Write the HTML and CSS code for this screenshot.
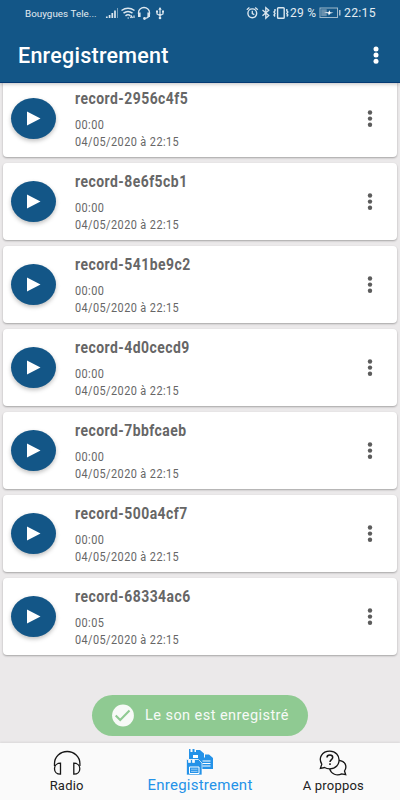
FILE: index.html
```html
<!DOCTYPE html>
<html lang="fr">
<head>
    <meta charset="UTF-8">
    <meta name="viewport" content="width=device-width, initial-scale=1.0">
    <title>Enregistrement</title>
    <link rel="stylesheet" href="styles.css">
</head>
<body>

    <header class="header">
        <!-- Barre d'état -->
        <div class="status">
            <span class="carrier">Bouygues Tele...</span>
            <svg class="status-left" width="60" height="16" viewBox="0 0 60 16" fill="none" stroke="#dce7ef">
                <path d="M1.800 13v-1.500M4.600 13v-3M7.300 13V8M10 13V5.500" stroke-width="1.700"/>
                <path d="M12.500 13V3" stroke-width="1" opacity=".5"/>
                <path d="M16.500 5.500q6.500-4.500 13 0M18.500 8.200q4.500-3.500 9 0M20.500 10.800q2.500-2 5 0" stroke-width="1.500"/>
                <path d="M22.500 13h1.500M25.500 13l1-2 1 2M29 10.500v2.500" stroke-width="1.200"/>
                <path d="M33.500 9V7.500a5.500 5 0 0 1 11 0V9q0 3.500-4 4.300" stroke-width="1.300"/>
                <path d="M34.300 7.500v4.500M43.700 7.500v4.500" stroke-width="2.600"/>
                <circle cx="39.500" cy="13.500" r="1.400" fill="#dce7ef" stroke="none"/>
                <path d="M55 3v10M52 6.500v2.500l3 1.500 3-1.500V6.500" stroke-width="1.200"/>
                <path d="M53.300 4.700L55 2l1.700 2.700zM51 5.500h2v2h-2zM57 5.500h2v2h-2z" fill="#dce7ef" stroke="none"/>
                <circle cx="55" cy="13" r="1.300" fill="#dce7ef" stroke="none"/>
            </svg>
            <svg class="status-right" width="44" height="16" viewBox="0 0 44 16" fill="none" stroke="#dce7ef">
                <circle cx="6.300" cy="8.300" r="4.400" stroke-width="1.400"/>
                <path d="M6.300 5.700v3l2 1M.8 4.700l2.600-2.200M11.800 4.700L9.200 2.500" stroke-width="1.300"/>
                <path d="M16.500 5l6.300 5.500-3 2.700V2.600l3 2.700-6.300 5.500" stroke-width="1.300"/>
                <rect x="31.600" y="2.800" width="6.600" height="10.400" rx=".8" stroke-width="1.400"/>
                <path d="M29 4v1.800l-1 1.200 1 1.500-1 1.500 1 1.500M40.800 4v1.800l1 1.200-1 1.500 1 1.500-1 1.500" stroke-width="1.400"/>
            </svg>
            <span class="percent">29 %</span>
            <svg class="battery" width="23" height="12" viewBox="0 0 23 12">
                <rect x="1" y="1" width="17.500" height="9.500" fill="none" stroke="#9fb9cb"/>
                <rect x="2.200" y="2.200" width="5.500" height="7" fill="#6890ae"/>
                <path d="M5 5.300h4.500l.8-2 1 2 3.200.5-3.200.8-1.500 2-.5-2z" fill="#fff"/>
                <path d="M20.800 3v5.500" stroke="#c3d3df" stroke-width="1.300"/>
            </svg>
            <span class="clock">22:15</span>
        </div>
        <div class="toolbar">
            <h1>Enregistrement</h1>
            <svg class="menu" width="8" height="20" viewBox="0 0 8 20" fill="#fff">
                <circle cx="4" cy="4" r="2.500"/><circle cx="4" cy="10.100" r="2.500"/><circle cx="4" cy="16.200" r="2.500"/>
            </svg>
        </div>
    </header>

    <!-- Liste des enregistrements -->
    <main id="records"></main>

    <div class="toast">
        <svg width="24" height="24" viewBox="0 0 24 24">
            <circle cx="12" cy="11.500" r="10.900" fill="#f7faf7"/>
            <path d="M4.700 11.400l4.500 4.500 9.300-9.300" fill="none" stroke="#8fca92" stroke-width="2.100"/>
        </svg>
        <span>Le son est enregistré</span>
    </div>

    <nav class="tabs">
        <a class="tab">
            <svg width="30" height="28" viewBox="0 0 30 28" fill="none" stroke="#161616" stroke-width="1.300">
                <path d="M2.500 17v-2.500a12.700 12 0 0 1 25.400 0V17"/>
                <path d="M8.500 14.200v11c-8 0-8-11 0-11zM21.800 14.200v11c8 0 8-11 0-11z"/>
            </svg>
            <span>Radio</span>
        </a>
        <a class="tab active">
            <svg width="30" height="28" viewBox="0 0 30 28">
                <path d="M4 0h1.500v3h2V0h2v3h1.500V1h4l4 3.500V10H4z" fill="#2492e8"/>
                <path d="M8 6h6v3H8z" fill="#fff"/>
                <path d="M13 6h1.500v2.500h2V6h2v2.500H20V5.500h4l4 3.500V20H13z" fill="#2492e8"/>
                <path d="M17.500 12h8M17.500 14.500h8M17.500 17h8" stroke="#fff" stroke-width="1.100"/>
                <path d="M1.500 10.500h2v3h2v-3h2v3h2v-3h4l3.500 3.500v12H1.500z" fill="#2492e8" stroke="#fafafa" stroke-width=".7"/>
                <path d="M4.500 18h9.500v6.500H4.500z" fill="#2492e8" stroke="#fff"/>
                <path d="M6 20.200h6.500M6 22.400h6.500" stroke="#b9dcf8" stroke-width=".8"/>
            </svg>
            <span>Enregistrement</span>
        </a>
        <a class="tab">
            <svg width="30" height="28" viewBox="0 0 30 28" fill="none" stroke="#161616" stroke-width="1.300">
                <path d="M3.800 15.200C0 9 4 2.200 11.800 2.200c12.400 0 12.400 17.600 0 17.600-2.300 0-3.800-.4-5.200-1.300l-4.200.8z"/>
                <path d="M21 11.300c6.300.5 8.500 6.200 5.500 10.700l1.200 3.700-4-.8c-4.800 2.300-10.600.3-12-5"/>
                <path d="M9 8.500c0-3.300 5.700-3.300 5.700 0 0 2-2.700 2.200-2.700 4.500M12 14.300v1.600" stroke-width="1.500"/>
            </svg>
            <span>A proppos</span>
        </a>
    </nav>

    <script>
        const records = [
            ["record-2956c4f5", "00:00"],
            ["record-8e6f5cb1", "00:00"],
            ["record-541be9c2", "00:00"],
            ["record-4d0cecd9", "00:00"],
            ["record-7bbfcaeb", "00:00"],
            ["record-500a4cf7", "00:00"],
            ["record-68334ac6", "00:05"]
        ];

        document.getElementById("records").innerHTML = records.map(([name, time]) => `
            <div class="card">
                <div class="play">
                    <svg width="14" height="15" viewBox="0 0 14 15"><path d="M0 .5v14l13.500-7z" fill="#fff"/></svg>
                </div>
                <div class="info">
                    <h2>${name}</h2>
                    <p>${time}</p>
                    <p>04/05/2020 à 22:15</p>
                </div>
                <svg class="more" width="8" height="20" viewBox="0 0 8 20" fill="#5c5c5c">
                    <circle cx="4" cy="3.500" r="2.200"/><circle cx="4" cy="9.600" r="2.200"/><circle cx="4" cy="15.700" r="2.200"/>
                </svg>
            </div>`).join("");
    </script>

</body>
</html>
```
FILE: styles.css
```css
* {
    box-sizing: border-box;
}
body {
    display: flex;
    flex-direction: column;
    height: 800px;
    margin: 0;
    overflow: hidden;
    font-family: Roboto, "Liberation Sans", sans-serif;
    background: #ebe9ea;
}
h1, h2, p {
    margin: 0;
}
svg {
    display: block;
    flex: none;
}
.header {
    height: 83px;
    flex: none;
    position: relative;
    background: #135687;
    border-bottom: 1px solid #053a74;
    box-shadow: 0 1px 4px rgba(0, 0, 0, 0.25);
    color: white;
}
.status {
    display: flex;
    align-items: center;
    height: 26px;
    padding-left: 25px;
    color: #e3ecf2;
    white-space: nowrap;
}
.carrier {
    width: 80px;
    font-size: 9.8px;
    letter-spacing: 0.05px;
}
.status-right {
    margin-left: 81px;
}
.percent {
    width: 29px;
    font-size: 12px;
    letter-spacing: 0.3px;
}
.clock {
    margin-left: 2px;
    font-size: 12.2px;
    letter-spacing: 0.3px;
}
.toolbar {
    display: flex;
    justify-content: space-between;
    align-items: center;
    height: 57px;
    padding: 0 20px 0 18px;
}
h1 {
    padding-top: 1px;
    font-size: 21.5px;
    font-weight: 500;
    letter-spacing: 0.25px;
}
#records {
    display: flex;
    flex-direction: column;
    gap: 6px;
    flex: 1;
    margin-top: -3px;
    padding: 0 3px;
}
.card {
    display: flex;
    align-items: center;
    height: 77px;
    flex: none;
    padding: 0 23px 0 8px;
    background: white;
    border-radius: 4px;
    box-shadow: 0 1px 2px rgba(0, 0, 0, 0.3);
}
.play {
    display: flex;
    align-items: center;
    width: 45px;
    height: 41px;
    padding-left: 16px;
    border-radius: 50%;
    background: #135687;
    box-shadow: 0 2px 4px rgba(0, 0, 0, 0.25);
}
.info {
    flex: 1;
    margin-left: 18.5px;
    padding-top: 2px;
    color: #666;
    white-space: nowrap;
}
.info h2 {
    height: 27px;
    font-size: 16px;
    line-height: 20px;
    letter-spacing: 0.55px;
    transform: scaleX(0.87);
    transform-origin: left;
}
.info p {
    font-size: 12.5px;
    line-height: 17px;
    letter-spacing: 0.5px;
    transform: scaleX(0.87);
    transform-origin: left;
}
.toast {
    display: flex;
    align-items: center;
    align-self: center;
    width: 216px;
    height: 41px;
    flex: none;
    margin-bottom: 7px;
    padding-left: 19px;
    border-radius: 21px;
    background: #8fca92;
    color: #f7faf7;
    font-size: 14.5px;
    letter-spacing: 0.45px;
    white-space: nowrap;
}
.toast span {
    margin-left: 10px;
}
.tabs {
    display: flex;
    justify-content: space-around;
    height: 57px;
    flex: none;
    background: #fafafa;
    box-shadow: 0 -1px 2px rgba(0, 0, 0, 0.08);
}
.tab {
    display: flex;
    flex-direction: column;
    align-items: center;
    width: 133px;
    padding-top: 6px;
    color: #222;
    font-size: 13px;
    line-height: 17px;
    letter-spacing: 0.2px;
}
.active {
    color: #2492e8;
    font-size: 15px;
    letter-spacing: 0.25px;
}
```
